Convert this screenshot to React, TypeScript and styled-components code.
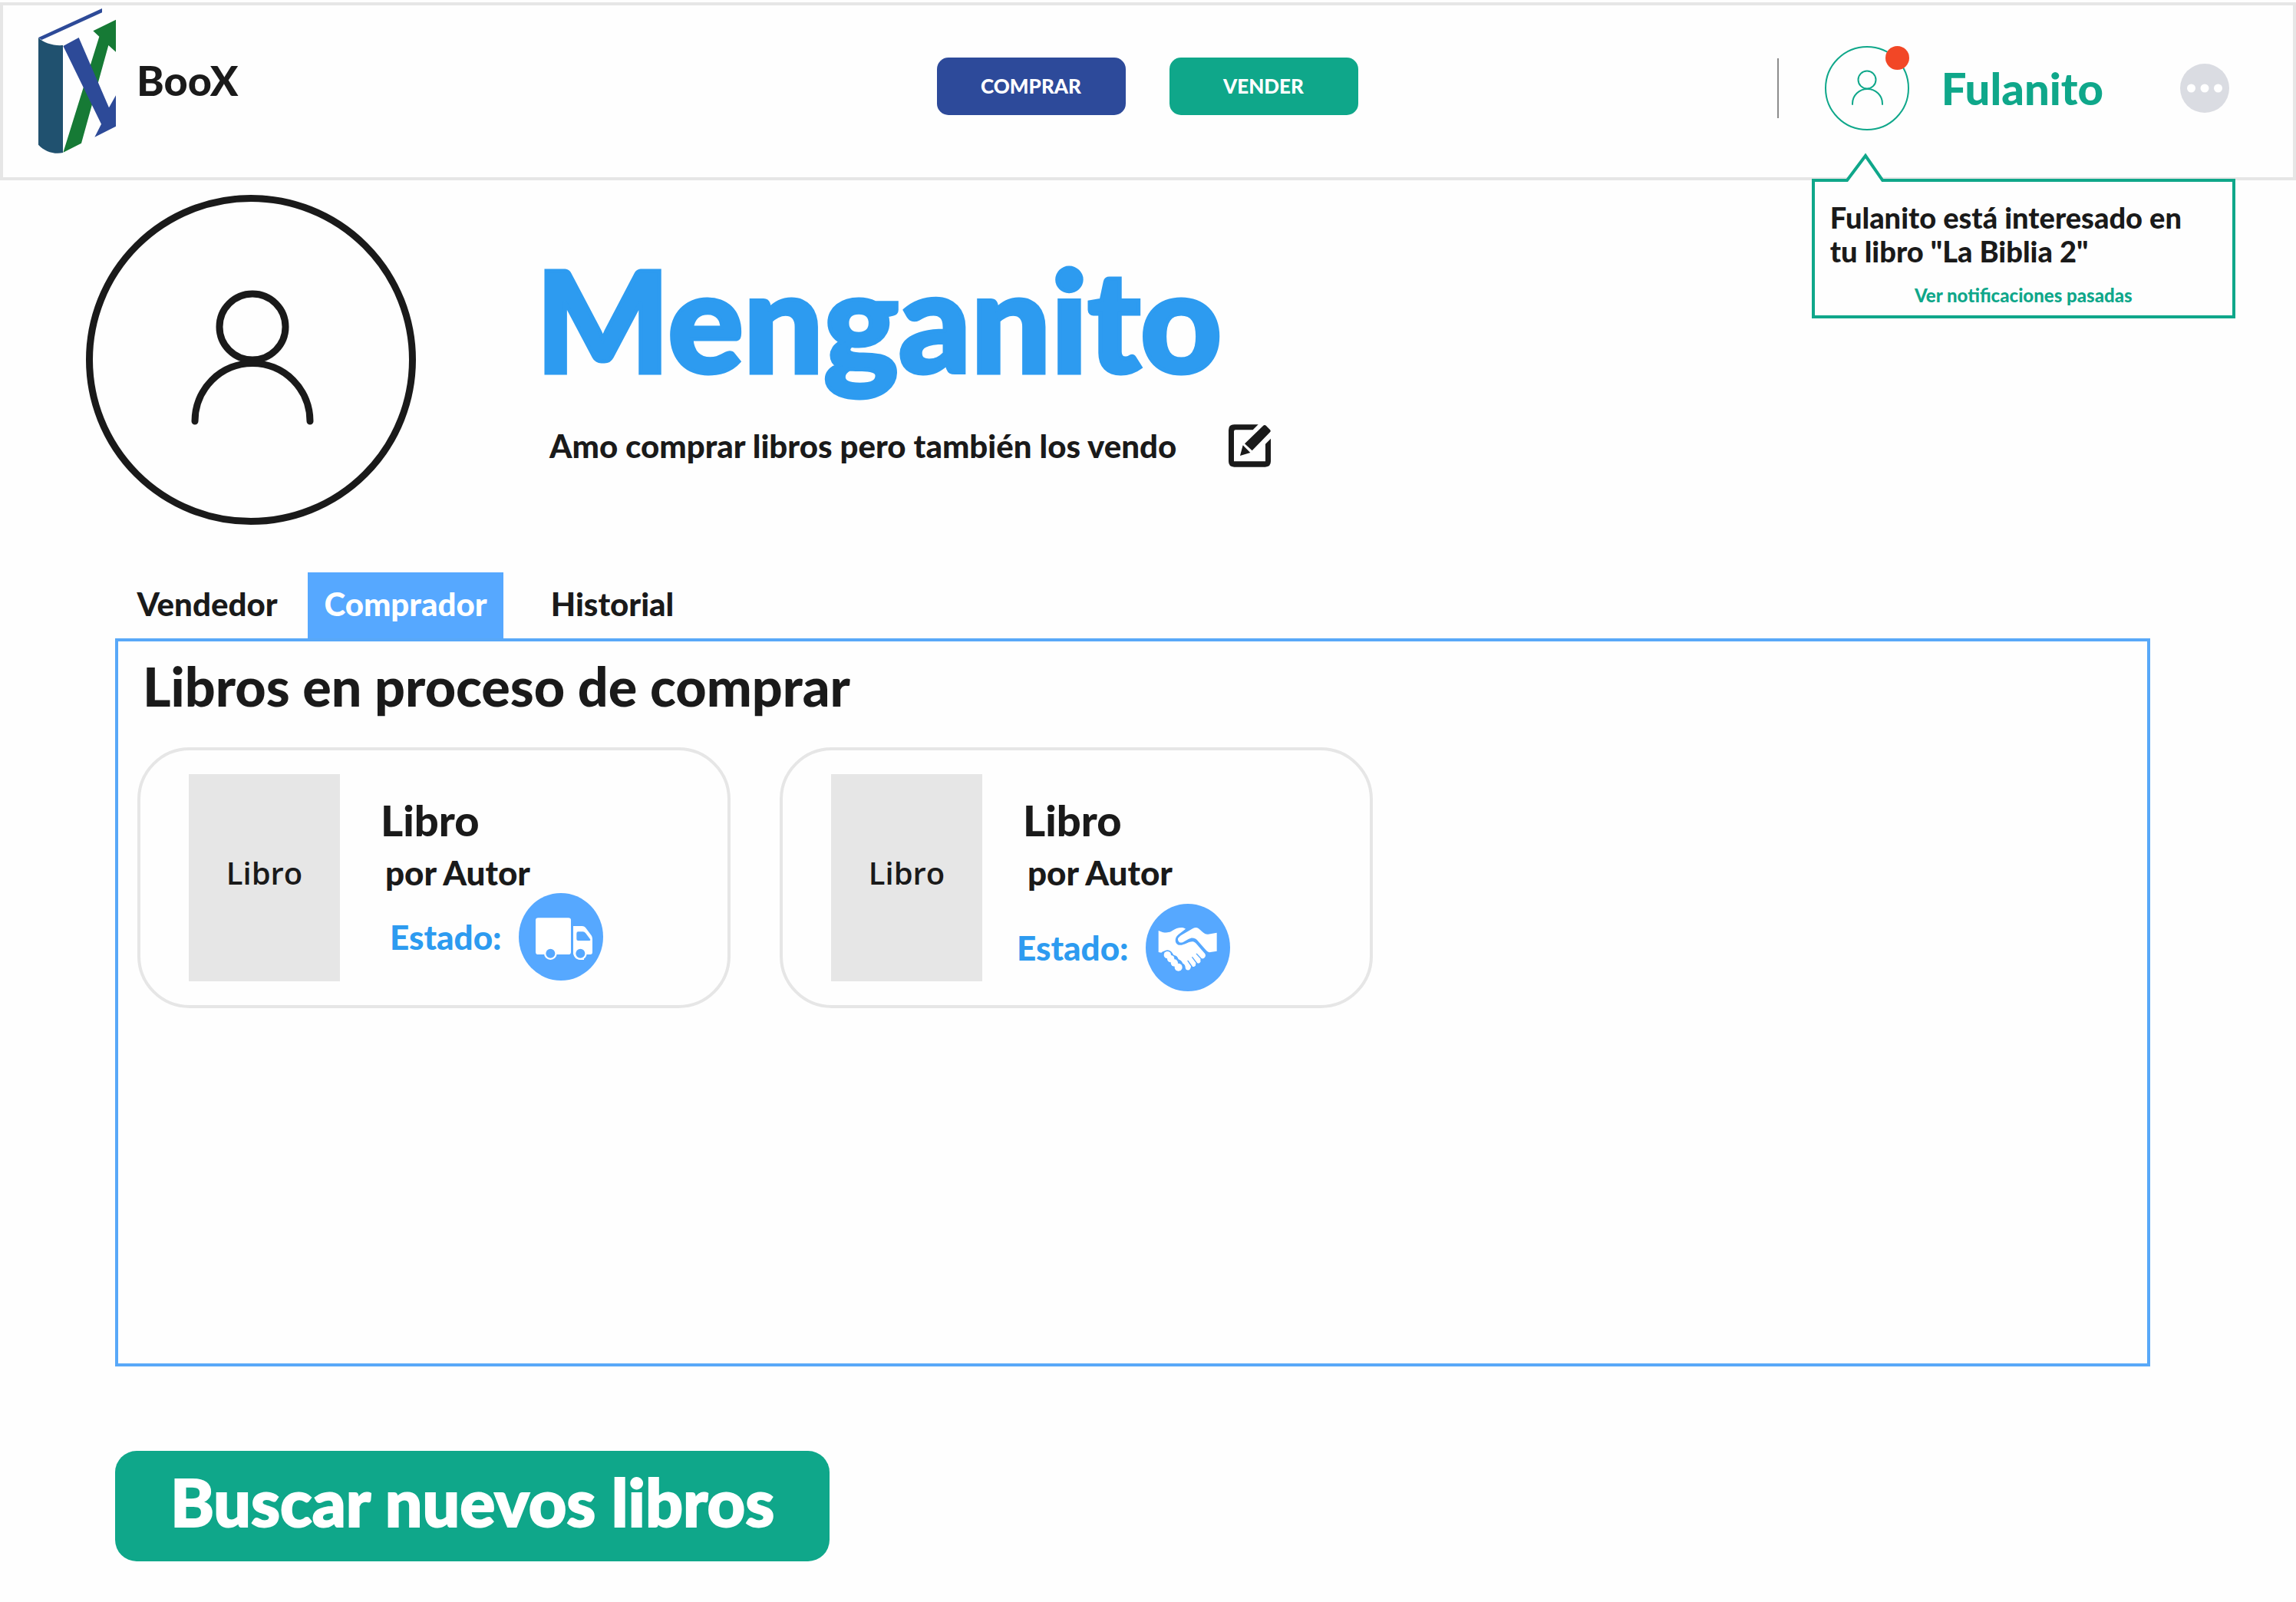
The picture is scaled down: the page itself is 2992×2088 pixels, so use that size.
import React from "react";
import styled, { createGlobalStyle } from "styled-components";

const color = {
  ink: "#1a1a1a",
  line: "#e6e6e6",
  navy: "#2d4a9a",
  green: "#0fa78a",
  sky: "#2d9bf0",
  tab: "#56a8ff",
  red: "#f24726",
};

const GlobalStyle = createGlobalStyle`
  *, *::before, *::after { box-sizing: border-box; }
  body {
    margin: 0;
    background: #fefefe;
    color: ${color.ink};
    font-family: Lato, "Open Sans", sans-serif;
    font-weight: 900;
  }
  h1, h2, h3, p { margin: 0; font-weight: 900; }
  button { font: inherit; color: inherit; border: 0; padding: 0; background: none; cursor: pointer; }
  svg { display: block; flex: none; }
`;

const Header = styled.header`
  display: grid;
  grid-template-columns: 1fr auto 1fr;
  align-items: center;
  height: 232px;
  margin-top: 3px;
  padding: 0 48px 0 46px;
  border: 4px solid ${color.line};
`;

const Brand = styled.a`
  display: flex;
  align-items: center;
  gap: 27px;
  padding-bottom: 28px;
  color: inherit;
  text-decoration: none;
  font-size: 54px;
  line-height: 64px;
`;

const MainNav = styled.nav`
  display: flex;
  gap: 57px;
  padding-bottom: 14px;
`;

const NavButton = styled.button<{ $tone: string }>`
  width: 246px;
  height: 75px;
  border-radius: 15px;
  background: ${(p) => p.$tone};
  color: #fff;
  font-size: 26px;
`;

const Account = styled.div`
  display: flex;
  align-items: center;
  justify-content: flex-end;
  padding: 0 35px 8px 0;
`;

const Divider = styled.span`
  width: 2px;
  height: 78px;
  margin-right: 60px;
  background: #8c8c8c;
`;

const AvatarAnchor = styled.div`
  position: relative;
  color: ${color.green};
`;

const Badge = styled.span`
  position: absolute;
  top: 0;
  right: 0;
  width: 31px;
  height: 31px;
  border-radius: 50%;
  background: ${color.red};
`;

const AccountName = styled.span`
  margin: 0 100px 0 42px;
  color: ${color.green};
  font-size: 58px;
  line-height: 64px;
`;

const Popover = styled.aside`
  position: absolute;
  top: 173px;
  left: -17px;
  width: 552px;
  height: 182px;
  padding: 24px 20px;
  border: 4px solid ${color.green};
  background: #fefefe;
  color: ${color.ink};
`;

const PopoverTip = styled.svg`
  position: absolute;
  top: -38px;
  left: 38px;
`;

const PopoverText = styled.p`
  font-size: 38px;
  line-height: 44px;
  padding-right: 20px;
`;

const PopoverLink = styled.a`
  display: block;
  margin-top: 22px;
  color: ${color.green};
  font-size: 24px;
  line-height: 28px;
  text-align: center;
  text-decoration: none;
`;

const Profile = styled.section`
  display: flex;
  align-items: center;
  gap: 156px;
  padding: 19px 112px 0;
`;

const ProfileName = styled.h1`
  color: ${color.sky};
  font-size: 184px;
  line-height: 172px;
  -webkit-text-stroke: 5px ${color.sky};
`;

const BioRow = styled.div`
  display: flex;
  align-items: center;
  gap: 68px;
  margin-top: 52px;
  padding-left: 18px;
  font-size: 42px;
  line-height: 56px;
`;

const Main = styled.main`
  padding: 62px 190px 52px 150px;
`;

const Tabs = styled.div`
  display: grid;
  grid-template-columns: 240px 255px 262px;
  column-gap: 11px;
`;

const Tab = styled.button`
  height: 86px;
  padding-bottom: 4px;
  font-size: 42px;
  line-height: 48px;

  &[aria-selected="true"] {
    background: ${color.tab};
    color: #fff;
  }
`;

const Panel = styled.section`
  min-height: 949px;
  padding: 18px 25px;
  border: 4px solid #58a8f8;
`;

const PanelTitle = styled.h2`
  padding-left: 7px;
  font-size: 70px;
  line-height: 80px;
`;

const Cards = styled.div`
  display: flex;
  flex-wrap: wrap;
  gap: 64px;
  margin-top: 40px;
`;

const Card = styled.article`
  display: flex;
  gap: 45px;
  width: 773px;
  height: 340px;
  padding: 31px 62px 31px 63px;
  border: 4px solid ${color.line};
  border-radius: 68px;
`;

const Cover = styled.div`
  display: grid;
  place-items: center;
  width: 197px;
  height: 270px;
  padding-bottom: 14px;
  background: ${color.line};
  font: 600 40px "Open Sans", sans-serif;
`;

const BookTitle = styled.h3`
  padding: 28px 0 0 8px;
  font-size: 56px;
  line-height: 64px;
`;

const Author = styled.p`
  padding: 12px 0 0 14px;
  font-size: 44px;
  line-height: 48px;
`;

const Status = styled.div<{ $inset: number; $drop: number }>`
  display: flex;
  align-items: center;
  gap: 22px;
  margin-top: ${(p) => p.$drop}px;
  padding-left: ${(p) => p.$inset}px;
  color: ${color.sky};
  font-size: 44px;
  line-height: 48px;
`;

const SearchButton = styled.button`
  display: block;
  height: 144px;
  margin-top: 110px;
  padding: 0 72px 14px;
  border-radius: 28px;
  background: ${color.green};
  color: #fff;
  font-size: 86px;
  -webkit-text-stroke: 2px #fff;
`;

function Logo() {
  return (
    <svg width="101" height="189" viewBox="150 33 303 567" aria-hidden="true">
      <path fill="#2d4a98" d="M150 147 399 33V49L163 156Z" />
      <path fill="#20516f" d="M150 147C170 168 210 180 246 177V597C212 605 174 592 150 566Z" />
      <path fill="#167a35" d="M247 596 388 143 364 121 453 77V203L424 177 318 560Z" />
      <path fill="#2d4a98" d="M247 180 308 147 426 421 453 373V494L370 536 396 485Z" />
    </svg>
  );
}

function SmallAvatar() {
  return (
    <svg width="110" height="110" viewBox="0 0 110 110" fill="none" stroke="currentColor" strokeWidth="2" aria-hidden="true">
      <circle cx="55" cy="55" r="54" />
      <circle cx="55" cy="44" r="11.5" />
      <path d="M36 76v-1a19.500 19 0 0 1 39 0v1" strokeLinecap="round" />
    </svg>
  );
}

function LargeAvatar() {
  return (
    <svg width="430" height="430" viewBox="0 0 430 430" fill="none" stroke={color.ink} strokeWidth="9" role="img" aria-label="Menganito">
      <circle cx="215" cy="215" r="210.500" />
      <circle cx="217" cy="172" r="43" />
      <path d="M142 295a75 75.500 0 0 1 150 0" strokeLinecap="round" />
    </svg>
  );
}

function MoreIcon() {
  return (
    <svg width="64" height="64" viewBox="0 0 64 64" aria-hidden="true">
      <circle cx="32" cy="32" r="32" fill="#dadce2" />
      <g fill="#fff">
        <circle cx="14.500" cy="32" r="5.500" />
        <circle cx="32" cy="32" r="5.500" />
        <circle cx="49.500" cy="32" r="5.500" />
      </g>
    </svg>
  );
}

function EditIcon() {
  return (
    <svg width="55" height="56" viewBox="33 44 165 166" fill={color.ink} aria-hidden="true">
      <path d="M55 44H149L128 65H60Q54 65 54 71V188H177V120L198 99V188Q198 210 176 210H55Q33 210 33 188V66Q33 44 55 44Z" />
      <path d="M96 119 168 49Q174 43 180 49L194 63Q200 69 195 74L125 146Z" />
      <path d="M89 125 118 154 78 166Z" />
    </svg>
  );
}

function TruckIcon() {
  return (
    <svg width="110" height="114" viewBox="45 45 330 342" role="img" aria-label="En camino">
      <ellipse cx="210" cy="216" rx="165" ry="171" fill={color.tab} />
      <g fill="#fff">
        <rect x="111" y="142" width="138" height="143" rx="10" />
        <circle cx="169" cy="281" r="25" />
        <path
          fillRule="evenodd"
          d="M258 174H293Q301 174 306 180L329 211Q333 217 333 224V276Q333 285 325 285H258ZM277 196Q271 196 271 203V225Q271 231 277 231H321Q327 231 324 225L306 201Q302 196 296 196Z"
        />
        <path d="M258 260H300V306H286Q262 304 258 281Z" />
        <circle cx="286" cy="281" r="25" />
      </g>
      <g fill={color.tab}>
        <circle cx="169" cy="281" r="18" />
        <circle cx="286" cy="281" r="18" />
      </g>
    </svg>
  );
}

function HandshakeIcon() {
  const knuckles = [
    [122, 257, 14],
    [135, 272, 14],
    [149, 288, 14],
    [165, 305, 15],
  ];
  return (
    <svg width="110" height="114" viewBox="37 57 330 342" role="img" aria-label="Trato acordado">
      <ellipse cx="202" cy="228" rx="165" ry="171" fill={color.tab} />
      <path
        fill="#fff"
        d="M87 162C108 172 126 172 140 163 158 150 182 146 193 155L165 177C145 192 151 223 178 218 195 214 208 204 220 205 228 205 235 213 245 225L268 251C275 260 268 273 257 271L250 275C256 284 245 294 236 288L232 291C236 302 222 306 214 301 214 321 193 321 192 306 192 298 188 292 182 290 178 280 172 276 165 274 162 264 155 258 146 259 142 245 130 238 118 240 108 241 102 245 98 248L87 246Z"
      />
      <g fill="none" stroke={color.tab} strokeWidth="4" strokeLinecap="round">
        <path d="M236 253 257 275" />
        <path d="M219 266 238 291" />
        <path d="M202 280 218 303" />
      </g>
      <path
        fill="#fff"
        d="M163 197C161 190 172 182 182 176L222 153Q234 147 243 153C256 163 266 178 281 176L315 170V242L290 246Q281 248 275 241L238 199C229 188 215 188 204 195L183 207C172 212 164 206 163 197Z"
      />
      {knuckles.map(([x, y, r]) => (
        <circle key={x} cx={x} cy={y} r={r + 5} fill={color.tab} />
      ))}
      {knuckles.map(([x, y, r]) => (
        <circle key={x} cx={x} cy={y} r={r} fill="#fff" />
      ))}
    </svg>
  );
}

const books = [
  { id: 1, inset: 20, drop: 3, icon: <TruckIcon /> },
  { id: 2, inset: 0, drop: 17, icon: <HandshakeIcon /> },
];

export default function App() {
  return (
    <>
      <GlobalStyle />
      <Header>
        <Brand href="#">
          <Logo />
          BooX
        </Brand>
        <MainNav>
          <NavButton $tone={color.navy}>COMPRAR</NavButton>
          <NavButton $tone={color.green}>VENDER</NavButton>
        </MainNav>
        <Account>
          <Divider />
          <AvatarAnchor>
            <SmallAvatar />
            <Badge />
            <Popover>
              <PopoverTip width="54" height="38" viewBox="0 0 54 38" aria-hidden="true">
                <path d="M3 38 28 4 52 38Z" fill="#fefefe" />
                <path d="M1 40 28 4 53 40" fill="none" stroke={color.green} strokeWidth="4" />
              </PopoverTip>
              <PopoverText>Fulanito está interesado en tu libro "La Biblia 2"</PopoverText>
              <PopoverLink href="#">Ver notificaciones pasadas</PopoverLink>
            </Popover>
          </AvatarAnchor>
          <AccountName>Fulanito</AccountName>
          <button aria-label="Más opciones">
            <MoreIcon />
          </button>
        </Account>
      </Header>

      <Profile>
        <LargeAvatar />
        <div>
          <ProfileName>Menganito</ProfileName>
          <BioRow>
            <p>Amo comprar libros pero también los vendo</p>
            <button aria-label="Editar descripción">
              <EditIcon />
            </button>
          </BioRow>
        </div>
      </Profile>

      <Main>
        <Tabs role="tablist">
          <Tab role="tab" aria-selected={false}>Vendedor</Tab>
          <Tab role="tab" aria-selected={true}>Comprador</Tab>
          <Tab role="tab" aria-selected={false}>Historial</Tab>
        </Tabs>
        <Panel role="tabpanel">
          <PanelTitle>Libros en proceso de comprar</PanelTitle>
          <Cards>
            {books.map((book) => (
              <Card key={book.id}>
                <Cover>Libro</Cover>
                <div>
                  <BookTitle>Libro</BookTitle>
                  <Author>por Autor</Author>
                  <Status $inset={book.inset} $drop={book.drop}>
                    <span>Estado:</span>
                    {book.icon}
                  </Status>
                </div>
              </Card>
            ))}
          </Cards>
        </Panel>
        <SearchButton>Buscar nuevos libros</SearchButton>
      </Main>
    </>
  );
}
